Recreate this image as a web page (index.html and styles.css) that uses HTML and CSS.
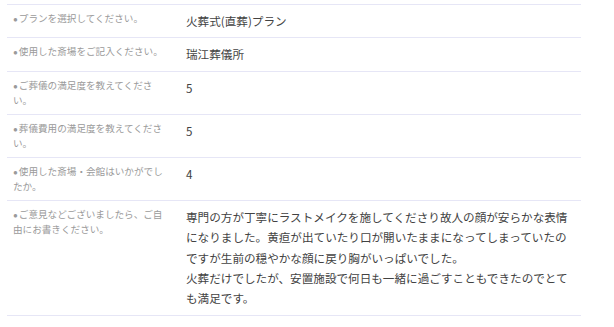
FILE: index.html
```html
<!DOCTYPE html>
<html lang="ja">
<head>
<meta charset="utf-8">
<link rel="stylesheet" href="styles.css">
</head>
<body>
<div class="table">
  <div class="row">
    <div class="label"><span class="dot">●</span>プランを選択してください。</div>
    <div class="value">火葬式(直葬)プラン</div>
  </div>
  <div class="row">
    <div class="label"><span class="dot">●</span>使用した斎場をご記入ください。</div>
    <div class="value">瑞江葬儀所</div>
  </div>
  <div class="row">
    <div class="label"><span class="dot">●</span>ご葬儀の満足度を教えてください。</div>
    <div class="value">5</div>
  </div>
  <div class="row">
    <div class="label"><span class="dot">●</span>葬儀費用の満足度を教えてください。</div>
    <div class="value">5</div>
  </div>
  <div class="row">
    <div class="label"><span class="dot">●</span>使用した斎場・会館はいかがでしたか。</div>
    <div class="value">4</div>
  </div>
  <div class="row">
    <div class="label"><span class="dot">●</span>ご意見などございましたら、ご自由にお書きください。</div>
    <div class="value">専門の方が丁寧にラストメイクを施してくださり故人の顔が安らかな表情になりました。黄疸が出ていたり口が開いたままになってしまっていたのですが生前の穏やかな顔に戻り胸がいっぱいでした。<br>火葬だけでしたが、安置施設で何日も一緒に過ごすこともできたのでとても満足です。</div>
  </div>
</div>
</body>
</html>
```

FILE: styles.css
```css
html, body {
  margin: 0;
  padding: 0;
  background: #ffffff;
}
body {
  font-family: "Noto Sans CJK JP", "Noto Sans", sans-serif;
}
.table {
  margin: 4px 0 0 7px;
  width: 574px;
  border-top: 1px solid #e6e6f6;
}
.row {
  display: flex;
  gap: 18px;
  padding: 6px 6px 6px 6px;
  border-bottom: 1px solid #e6e6f6;
}
.label {
  width: 155px;
  flex: none;
  font-size: 9.6px;
  line-height: 15px;
  color: #9a9a9a;
}
.dot {
  font-family: "Liberation Sans", sans-serif;
  font-size: 8px;
  line-height: 0;
  margin-right: 1px;
}
.value {
  flex: 1;
  font-size: 11.6px;
  line-height: 20.4px;
  color: #424242;
}
```
